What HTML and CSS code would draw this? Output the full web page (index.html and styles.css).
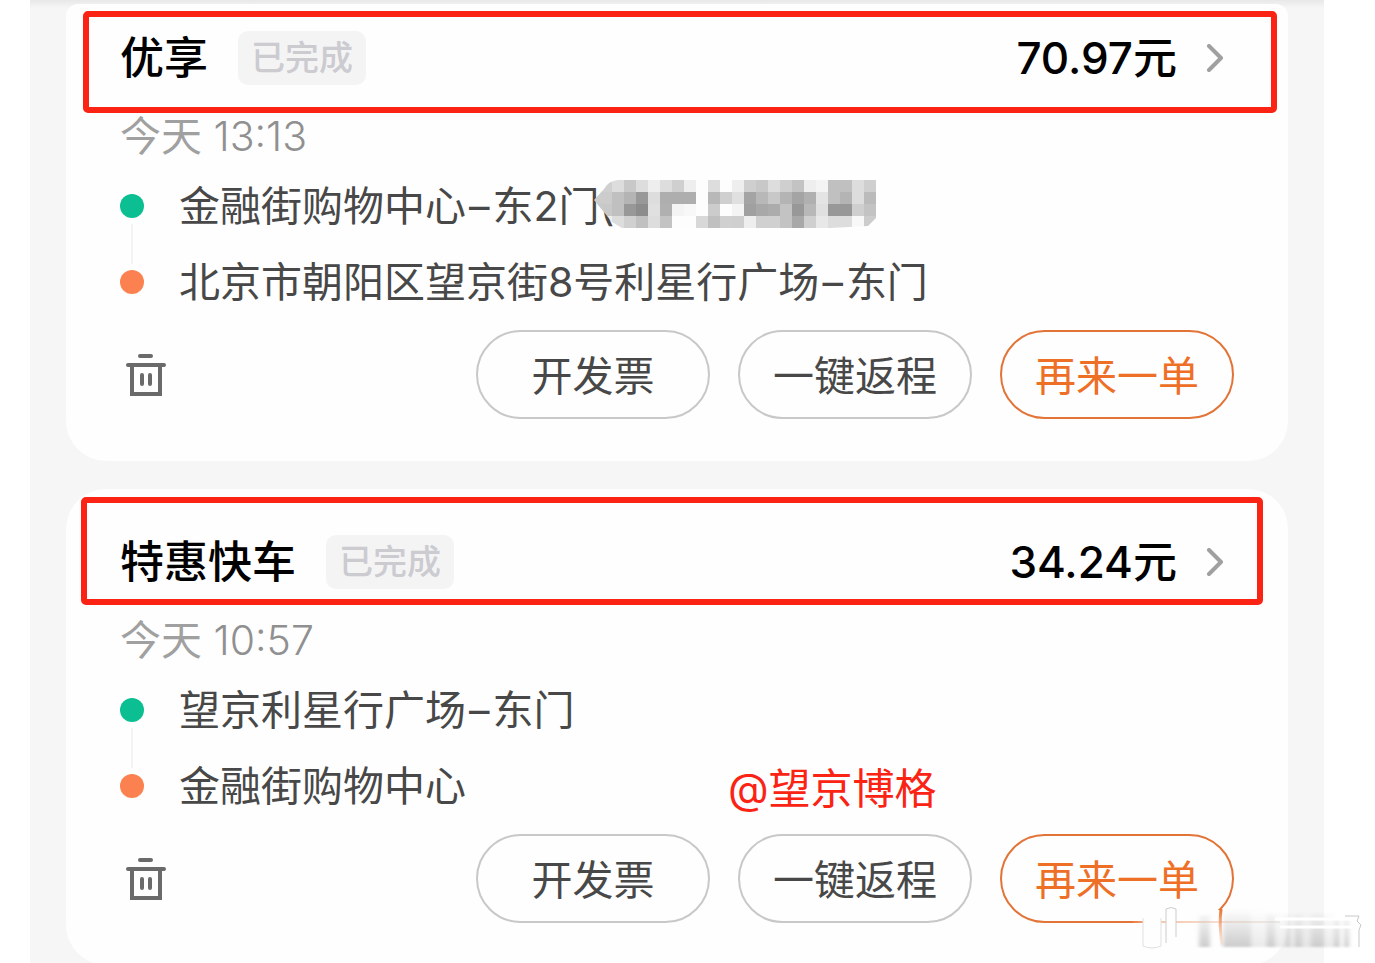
FILE: index.html
```
<!DOCTYPE html>
<html lang="zh-CN">
	<head>
		<meta charset="utf-8">
		<title>我的行程</title>
		<link rel="stylesheet" href="styles.css">
	</head>
	<body>
		<svg width="0" height="0" class="symbols">
			<symbol id="trash" viewBox="0 0 40 44">
				<path d="M14 3h11M2 12h36M6 12v29h28V12M16 22v9M24 22v9" fill="none" stroke="#6a6a6a" stroke-width="4" stroke-linecap="round"/>
			</symbol>
			<symbol id="arrow" viewBox="0 0 18 28">
				<path d="M3 2l12 12L3 26" fill="none" stroke="#a0a0a0" stroke-width="4" stroke-linecap="round" stroke-linejoin="round"/>
			</symbol>
		</svg>

		<main class="app">
			<section class="card first">
				<header class="head">
					<h2>优享</h2>
					<span class="status">已完成</span>
					<a class="price" href="#">70.97元<svg class="arrow"><use href="#arrow"/></svg></a>
				</header>
				<p class="time">今天 <time>13:13</time></p>
				<ul class="route">
					<li class="from"><span>金融街购物中心<i>–</i>东2门(</span></li>
					<li class="to"><span>北京市朝阳区望京街8号利星行广场<i>–</i>东门</span></li>
				</ul>
				<div class="actions">
					<button class="delete" aria-label="删除"><svg><use href="#trash"/></svg></button>
					<button class="pill">开发票</button>
					<button class="pill">一键返程</button>
					<button class="pill again">再来一单</button>
				</div>
				<svg class="mosaic" viewBox="0 0 284 48">
					<clipPath id="mosaic-shape">
						<path d="M2 20L12 9Q16 1 26 0H284V38L276 46L238 48H30L20 42Z"/>
					</clipPath>
					<g id="mosaic" clip-path="url(#mosaic-shape)" shape-rendering="crispEdges"></g>
				</svg>
				<div class="mark"></div>
			</section>

			<section class="card second">
				<header class="head">
					<h2>特惠快车</h2>
					<span class="status">已完成</span>
					<a class="price" href="#">34.24元<svg class="arrow"><use href="#arrow"/></svg></a>
				</header>
				<p class="time">今天 <time>10:57</time></p>
				<ul class="route">
					<li class="from"><span>望京利星行广场<i>–</i>东门</span></li>
					<li class="to"><span>金融街购物中心</span></li>
				</ul>
				<div class="actions">
					<button class="delete" aria-label="删除"><svg><use href="#trash"/></svg></button>
					<button class="pill">开发票</button>
					<button class="pill">一键返程</button>
					<button class="pill again">再来一单</button>
				</div>
				<div class="author">@望京博格</div>
				<div class="mark"></div>
			</section>
		</main>

		<!-- smeared stamp in the corner -->
		<svg class="smear" viewBox="0 0 240 48">
			<defs>
				<linearGradient id="down" x1="0" y1="0" x2="0" y2="1">
					<stop offset="0" stop-color="#ccc" stop-opacity="0"/>
					<stop offset="1" stop-color="#ccc"/>
				</linearGradient>
				<linearGradient id="fade" gradientUnits="userSpaceOnUse" x1="0" y1="0" x2="150" y2="0">
					<stop offset="0" stop-color="#e8702c"/>
					<stop offset="0.15" stop-color="#f5c4a8"/>
					<stop offset="0.6" stop-color="#f8ded0"/>
					<stop offset="1" stop-color="#eee"/>
				</linearGradient>
				<linearGradient id="drip" gradientUnits="userSpaceOnUse" x1="0" y1="4" x2="0" y2="40">
					<stop offset="0" stop-color="#e8702c"/>
					<stop offset="1" stop-color="#f8c8b0" stop-opacity="0.3"/>
				</linearGradient>
				<filter id="soft"><feGaussianBlur stdDeviation="2 1"/></filter>
			</defs>
			<path d="M4 5H108V24H4Z" fill="#fefefe"/>
			<path d="M2 17H150" stroke="url(#fade)" stroke-width="2"/>
			<g filter="url(#soft)">
				<path d="M69 10h11v32H69ZM93 4h28v38H93ZM136 8h9v34h-9ZM156 8h5v34h-5ZM164 8h8v34h-8ZM181 8h13v34h-13ZM204 14h6v28h-6ZM214 14h5v28h-5Z" fill="url(#down)"/>
				<path d="M121 4h14v38h-14ZM145 8h11v34h-11ZM172 8h9v34h-9ZM194 8h10v34h-10Z" fill="url(#down)" opacity="0.4"/>
			</g>
			<path d="M36 38V4q5-3 10 0V32" fill="#fefefe" stroke="#ccc"/>
			<path d="M13 13V41q9 4 18 0V13" fill="#fefefe" stroke="#e0e0e0"/>
			<path d="M145 14H227M150 22H230" stroke="#fff" stroke-width="3"/>
			<path d="M215 11H229L227 16L231 20L229 25V42" fill="none" stroke="#c8c8c8"/>
			<path d="M91 4Q89 20 92 40" fill="none" stroke="url(#drip)" stroke-width="3"/>
		</svg>

		<script>
			// one string per row, two hex digits of grey per square
			var rows = [
				"d0ddc8ddeeddcfeefdddfdeecfc8ddcfc3eef4c0c0ddcf",
				"ccc0b498ddaeaeaefdb8cfe0a4b8c8b4a4b0e4c0b4ddbb",
				"c8c0988ce0b0f4f8fdccfdf4a0a8acc398b8e09898cfc3",
				"eeddd0c0ddc3fdfdd8c0d0cfeed0d0c3a8cfe8ddddf8cc"
			];
			var mosaic = document.getElementById("mosaic");
			rows.forEach((row, y) => {
				row.match(/../g).forEach((grey, i) => {
					let rect = document.createElementNS("http://www.w3.org/2000/svg", "rect");
					let left = i === 0 ? 0 : 8 + i * 12;
					rect.setAttribute("x", left);
					rect.setAttribute("y", y * 12);
					rect.setAttribute("width", 20 + i * 12 - left);
					rect.setAttribute("height", 12);
					rect.setAttribute("fill", "#" + grey + grey + grey);
					mosaic.appendChild(rect);
				});
			});
		</script>
	</body>
</html>
```
FILE: styles.css
```
body {
	margin: 0;
	background-color: #fff;
	font-family: Inter, "Noto Sans CJK SC", sans-serif;
	position: relative;
	height: 100vh;
	overflow: hidden;
}

.symbols {
	position: absolute;
}

.app {
	margin: 0 51px 0 30px;
	padding: 4px 36px 0;
	min-height: 100vh;
	box-sizing: border-box;
	background: linear-gradient(#e8e8e8, #f6f6f6 8px);
}

.card {
	position: relative;
	background-color: #fefefe;
	border-radius: 40px;
	padding: 45px 54px 42px;
	margin-bottom: 28px;
}
.first {
	padding-top: 26px;
	border-radius: 12px 12px 40px 40px;
}

.head {
	display: flex;
	align-items: center;
	height: 56px;
}
h2 {
	margin: 0;
	font-size: 44px;
	line-height: 56px;
	font-weight: 500;
	color: #000;
}
.status {
	margin-left: 30px;
	padding: 0 13px;
	font-size: 34px;
	line-height: 54px;
	font-weight: 500;
	color: #cbcbd0;
	background-color: #f4f4f5;
	border-radius: 10px;
}
.price {
	margin-left: auto;
	margin-right: 10px;
	display: flex;
	align-items: center;
	gap: 29px;
	font-size: 44px;
	line-height: 56px;
	font-weight: 500;
	color: #000;
	text-decoration: none;
}
.arrow {
	width: 18px;
	height: 28px;
}

.time {
	margin: 26px 0 8px;
	font-size: 41px;
	line-height: 48px;
	color: #a0a0a0;
}
time {
	font-weight: 300;
	color: #909090;
}

.route {
	margin: 0;
	padding: 0;
	list-style: none;
	font-size: 41px;
	line-height: 76px;
	color: #484848;
	background: linear-gradient(#f3f3f3, #f3f3f3) 11px 56px / 2px 40px no-repeat;
}
.route li {
	display: flex;
	align-items: center;
	gap: 35px;
	height: 76px;
}
.route li::before {
	content: "";
	width: 24px;
	height: 24px;
	border-radius: 50%;
}
.route i {
	margin: 0 3px;
	font-style: normal;
}
.route .from::before {
	background-color: #0bbf92;
}
.route .to::before {
	background-color: #fc8150;
}

.actions {
	display: flex;
	align-items: center;
	gap: 28px;
	margin-top: 10px;
}
button {
	font-family: inherit;
	cursor: pointer;
	background: none;
	border: 0;
	padding: 0;
}
.delete {
	margin-right: auto;
	margin-left: 6px;
	height: 44px;
}
.delete svg {
	display: block;
	width: 40px;
	height: 44px;
}
.pill {
	width: 234px;
	height: 89px;
	padding-bottom: 4px;
	border: 2px solid #c8c8c8;
	border-radius: 45px;
	font-size: 41px;
	color: #484848;
}
.again {
	border-color: #e27438;
	color: #ee6f26;
}

/* things drawn over the cards */
.mark {
	position: absolute;
	box-sizing: border-box;
	border: 6px solid #fa2314;
	border-radius: 5px;
}
.first .mark {
	top: 7px;
	left: 17px;
	right: 11px;
	height: 102px;
}
.second .mark {
	top: 8px;
	left: 15px;
	right: 25px;
	height: 108px;
}
.mosaic {
	position: absolute;
	top: 176px;
	left: 526px;
	width: 284px;
	height: 48px;
}
.author {
	position: absolute;
	top: 270px;
	left: 662px;
	font-size: 42px;
	line-height: 60px;
	color: #fa2314;
}
.smear {
	position: absolute;
	top: 905px;
	right: 5px;
	width: 240px;
	height: 48px;
}
```
